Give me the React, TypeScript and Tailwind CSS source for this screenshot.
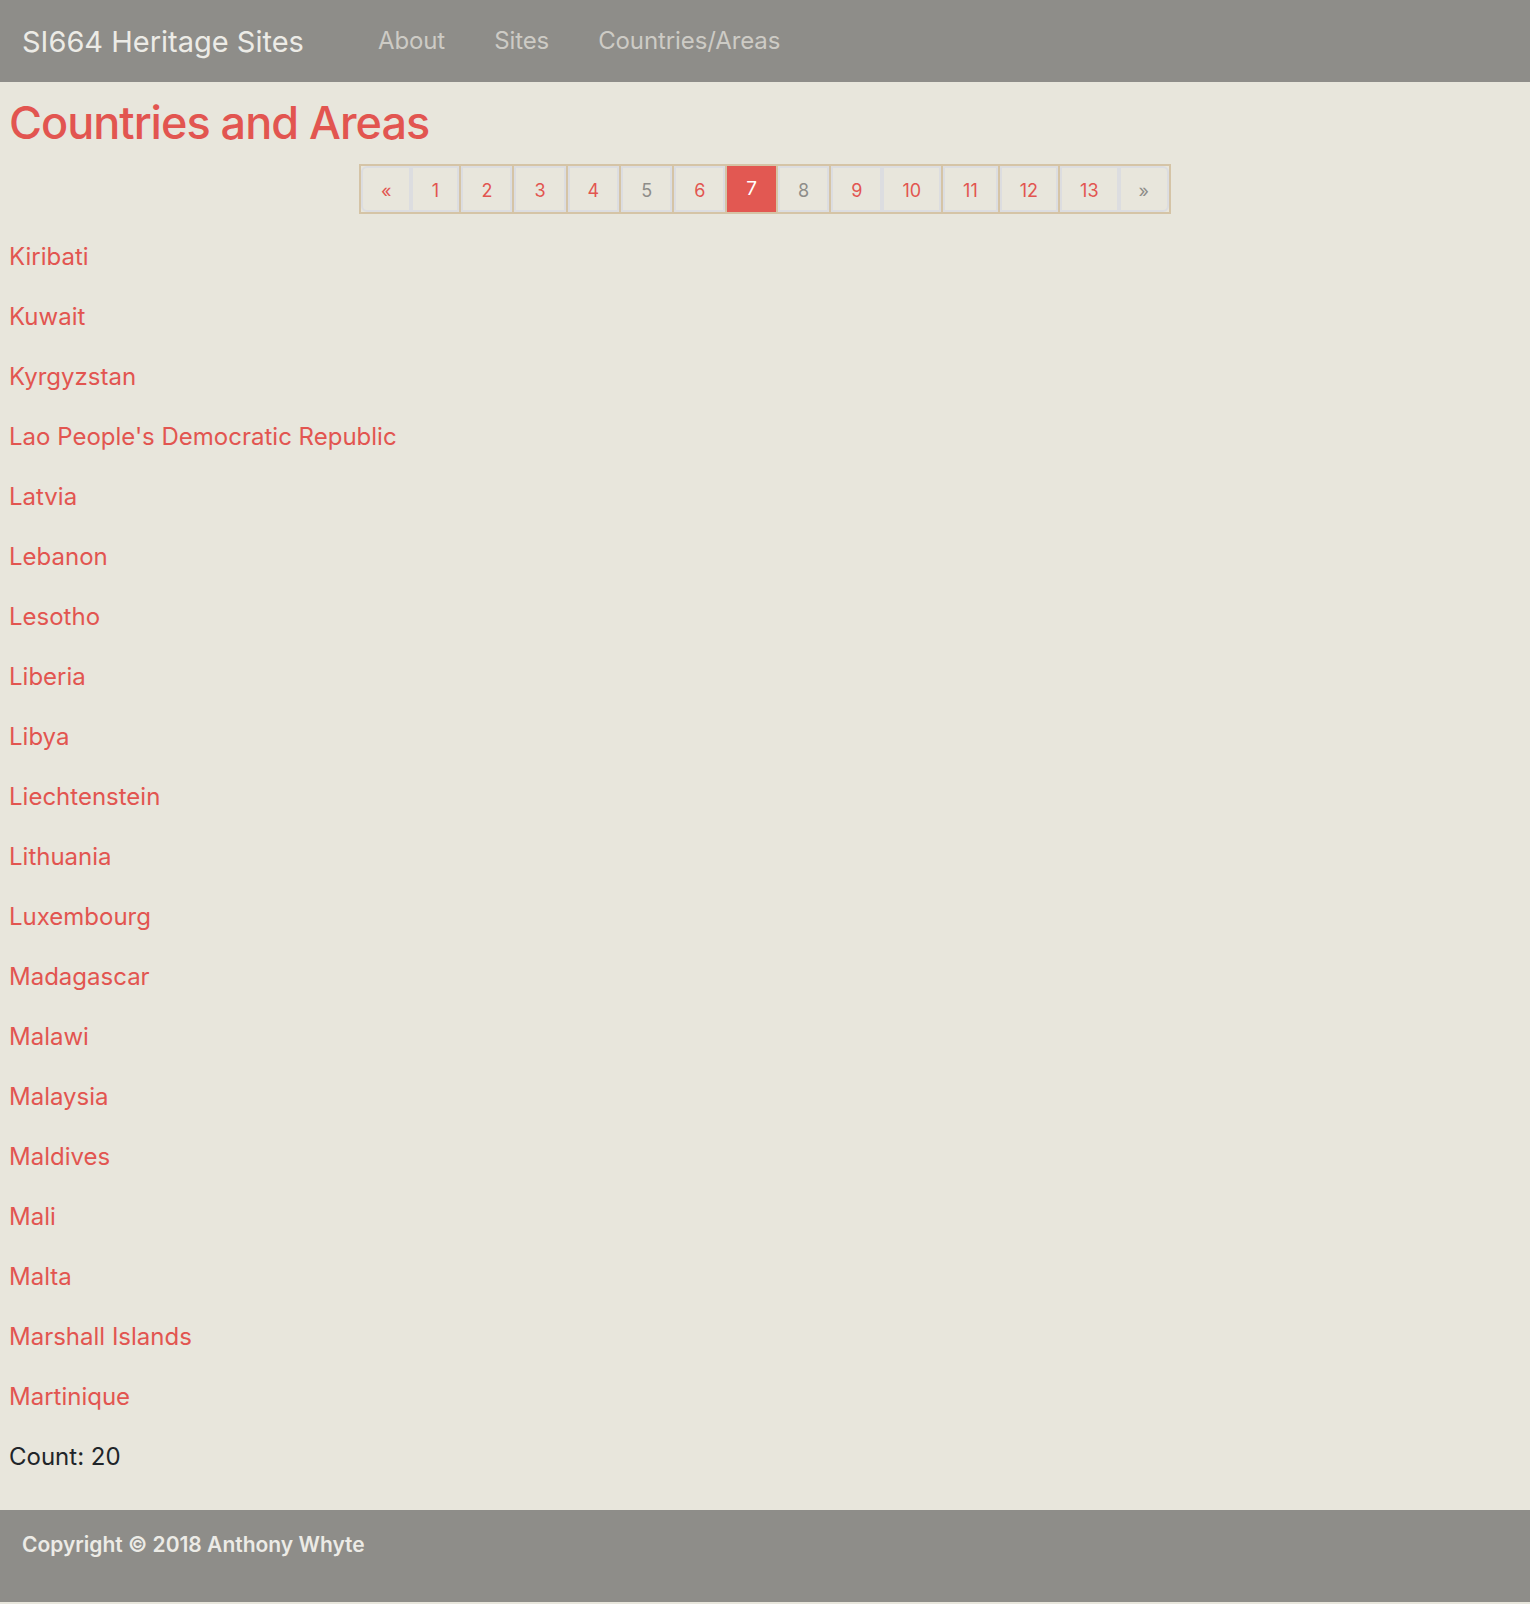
const countries = [
  "Kiribati",
  "Kuwait",
  "Kyrgyzstan",
  "Lao People's Democratic Republic",
  "Latvia",
  "Lebanon",
  "Lesotho",
  "Liberia",
  "Libya",
  "Liechtenstein",
  "Lithuania",
  "Luxembourg",
  "Madagascar",
  "Malawi",
  "Malaysia",
  "Maldives",
  "Mali",
  "Malta",
  "Marshall Islands",
  "Martinique",
];

// label, muted (grey text), tan divider after it
const pages: { label: string; muted?: boolean; sep: boolean; active?: boolean }[] = [
  { label: "«", sep: false },
  { label: "1", sep: true },
  { label: "2", sep: true },
  { label: "3", sep: true },
  { label: "4", sep: true },
  { label: "5", muted: true, sep: true },
  { label: "6", sep: true },
  { label: "7", sep: true, active: true },
  { label: "8", muted: true, sep: true },
  { label: "9", sep: false },
  { label: "10", sep: true },
  { label: "11", sep: true },
  { label: "12", sep: true },
  { label: "13", sep: false },
  { label: "»", muted: true, sep: false },
];

function Pagination() {
  return (
    <div className="flex justify-center">
      <ul className="flex border-2 border-[#d5c4a6]">
        {pages.map((p, i) => (
          <li
            key={p.label}
            className={
              "flex " + (p.sep && i < pages.length - 1 ? "border-r-2 border-[#d5c4a6]" : "")
            }
          >
            {p.active ? (
              <span className="flex h-[46px] min-w-[48px] items-start justify-center bg-[#e25852] px-[19px] pt-[12px] text-[19px] leading-[22px] text-white">
                {p.label}
              </span>
            ) : (
              <a
                href="#"
                className={
                  "flex h-[46px] items-center justify-center border-2 border-[#dcdde0] px-[18px] pt-[3px] text-[18px] leading-none " +
                  (p.muted ? "text-[#8e8d89] " : "text-[#e25550] ") +
                  (i === 0 ? "min-w-[50px] rounded-l-[6px] " : "min-w-[48px] ") +
                  (i === pages.length - 1 ? "min-w-[50px] rounded-r-[6px]" : "")
                }
              >
                {p.label}
              </a>
            )}
          </li>
        ))}
      </ul>
    </div>
  );
}

export default function App() {
  return (
    <div className="min-h-screen bg-[#e8e6dc] font-['Inter','Liberation_Sans',sans-serif]">
      <nav className="flex h-[82px] items-center bg-[#8e8d89] px-[22px]">
        <a href="#" className="text-[29px] leading-none text-[#ecebe6]">
          SI664 Heritage Sites
        </a>
        <div className="ml-[74px] flex gap-[49px] text-[24px] leading-none tracking-[-0.1px] text-[#cdcbc5]">
          <a href="#">About</a>
          <a href="#">Sites</a>
          <a href="#">Countries/Areas</a>
        </div>
      </nav>

      <main className="px-[9px] pb-[13px]">
        <h1 className="mt-[14px] mb-[14px] text-[45px] leading-[1.2] font-medium tracking-[-1px] text-[#e25550]">
          Countries and Areas
        </h1>
        <Pagination />
        <div className="mt-[25px]">
          {countries.map((c) => (
            <p key={c} className="mb-[24px] text-[24px] leading-[36px]">
              <a href="#" className="text-[#e25550]">
                {c}
              </a>
            </p>
          ))}
          <p className="mb-[22px] text-[24px] leading-[36px] text-[#212529]">Count: 20</p>
        </div>
      </main>

      <footer className="bg-[#8e8d89] px-[22px] pt-[18px] pb-[41px]">
        <p className="text-[21px] leading-[33px] font-semibold text-[#ecebe6]">
          Copyright © 2018 Anthony Whyte
        </p>
      </footer>
      <div className="h-[2px]" />
    </div>
  );
}
